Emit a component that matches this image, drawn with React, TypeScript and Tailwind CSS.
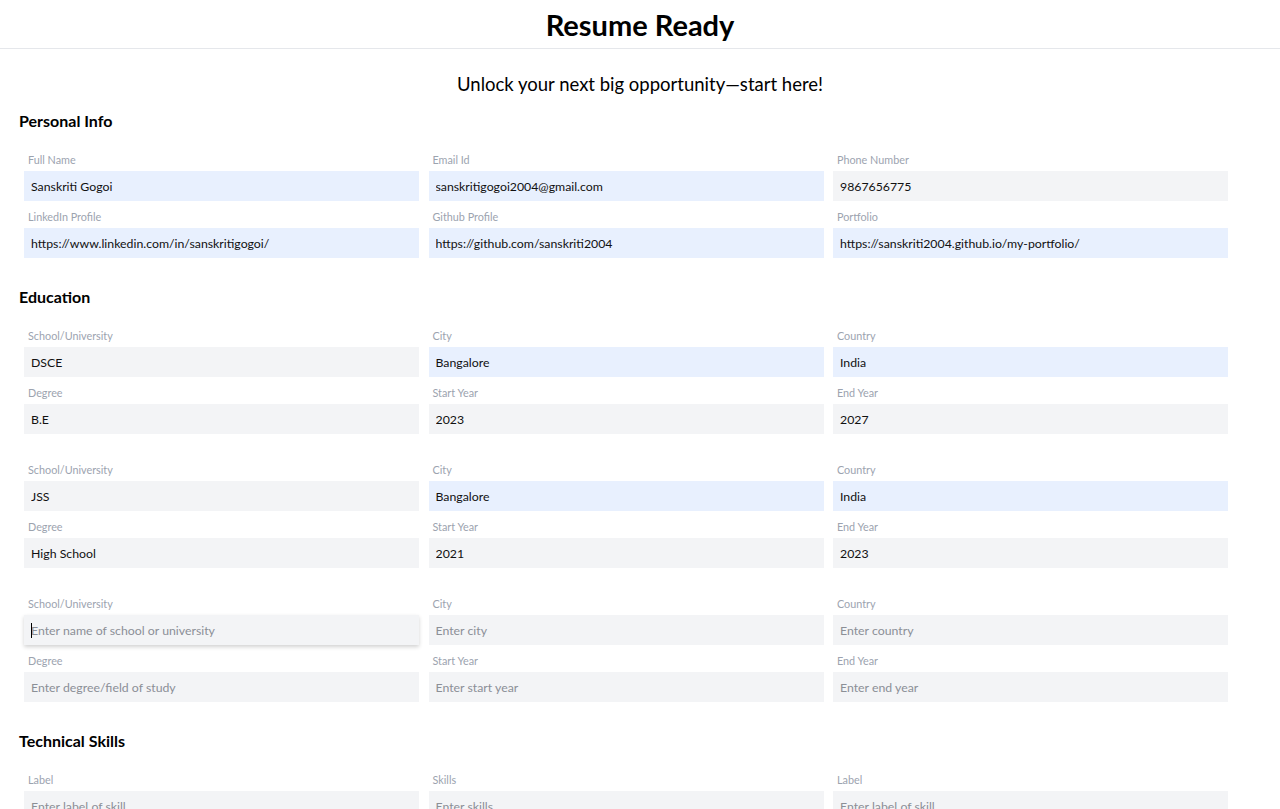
import React from "react";

type Field = {
  label: string;
  value?: string;
  placeholder?: string;
  filled?: boolean;
  focused?: boolean;
};

function Input({ label, value, placeholder, filled, focused }: Field) {
  return (
    <div className="flex flex-col">
      <label className="h-[14px] pl-1 mb-1 text-[10.8px] leading-[14px] text-[#9ca3af]">{label}</label>
      <div className="relative">
        <input
          readOnly
          value={value ?? ""}
          placeholder={placeholder}
          className={
            "w-full h-[30px] px-[7px] text-[12.3px] text-[#111] placeholder:text-[#8b8f96] outline-none " +
            (filled ? "bg-[#e8f0fe]" : "bg-[#f3f4f6]") +
            (focused ? " shadow-[0_2px_4px_rgba(0,0,0,0.18)]" : "")
          }
        />
        {focused && <span className="absolute left-[7px] top-[8px] h-[15px] w-px bg-black" />}
      </div>
    </div>
  );
}

function Grid({ fields }: { fields: Field[] }) {
  return (
    <div className="ml-[5px] w-[1204px] grid grid-cols-3 gap-x-[9.5px] gap-y-[9px]">
      {fields.map((f, i) => (
        <Input key={i} {...f} />
      ))}
    </div>
  );
}

function Section({ title, children }: { title: string; children: React.ReactNode }) {
  return (
    <section className="mb-[27px]">
      <h2 className="h-[24px] mb-5 text-[16px] leading-[24px] font-bold text-black">{title}</h2>
      {children}
    </section>
  );
}

export default function App() {
  return (
    <div className="min-h-screen bg-white text-black font-['Segoe_UI',Lato,sans-serif]">
      <header className="h-[49px] border-b border-[#e5e7eb] flex items-center justify-center">
        <h1 className="text-[29px] font-bold leading-none">Resume Ready</h1>
      </header>

      <p className="mt-[21px] h-[28px] text-center text-[18.5px] leading-[28px]">
        Unlock your next big opportunity—start here!
      </p>

      <main className="mt-[11px] px-[19px]">
        <Section title="Personal Info">
          <Grid
            fields={[
              { label: "Full Name", value: "Sanskriti Gogoi", filled: true },
              { label: "Email Id", value: "sanskritigogoi2004@gmail.com", filled: true },
              { label: "Phone Number", value: "9867656775" },
              { label: "LinkedIn Profile", value: "https://www.linkedin.com/in/sanskritigogoi/", filled: true },
              { label: "Github Profile", value: "https://github.com/sanskriti2004", filled: true },
              { label: "Portfolio", value: "https://sanskriti2004.github.io/my-portfolio/", filled: true },
            ]}
          />
        </Section>

        <Section title="Education">
          <div className="flex flex-col gap-[29px]">
            <Grid
              fields={[
                { label: "School/University", value: "DSCE" },
                { label: "City", value: "Bangalore", filled: true },
                { label: "Country", value: "India", filled: true },
                { label: "Degree", value: "B.E" },
                { label: "Start Year", value: "2023" },
                { label: "End Year", value: "2027" },
              ]}
            />
            <Grid
              fields={[
                { label: "School/University", value: "JSS" },
                { label: "City", value: "Bangalore", filled: true },
                { label: "Country", value: "India", filled: true },
                { label: "Degree", value: "High School" },
                { label: "Start Year", value: "2021" },
                { label: "End Year", value: "2023" },
              ]}
            />
            <Grid
              fields={[
                { label: "School/University", placeholder: "Enter name of school or university", focused: true },
                { label: "City", placeholder: "Enter city" },
                { label: "Country", placeholder: "Enter country" },
                { label: "Degree", placeholder: "Enter degree/field of study" },
                { label: "Start Year", placeholder: "Enter start year" },
                { label: "End Year", placeholder: "Enter end year" },
              ]}
            />
          </div>
        </Section>

        <Section title="Technical Skills">
          <Grid
            fields={[
              { label: "Label", placeholder: "Enter label of skill" },
              { label: "Skills", placeholder: "Enter skills" },
              { label: "Label", placeholder: "Enter label of skill" },
            ]}
          />
        </Section>
      </main>
    </div>
  );
}
